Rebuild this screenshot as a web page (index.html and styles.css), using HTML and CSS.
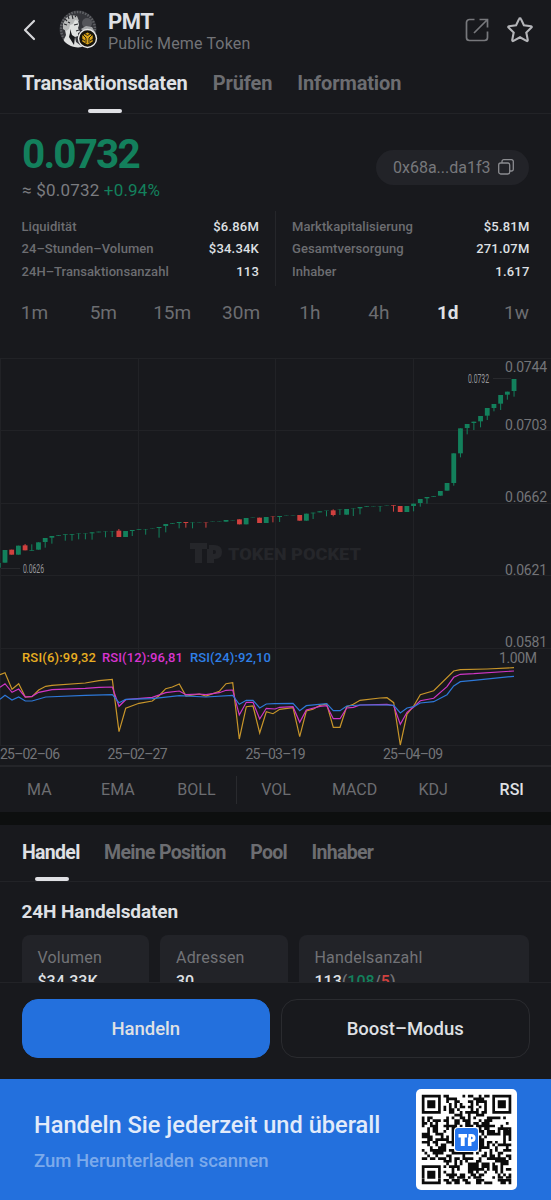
FILE: index.html
```html
<!DOCTYPE html>
<html lang="de">
<head>
    <meta charset="UTF-8">
    <meta name="viewport" content="width=device-width, initial-scale=1.0">
    <title>PMT - Public Meme Token</title>
    <link rel="stylesheet" href="styles.css">
</head>
<body>
    <div class="page">
        <header class="header">
            <svg class="back" width="14" height="22" viewBox="0 0 14 22"><path d="M12 2 3 11l9 9"/></svg>
            <svg class="avatar" width="39" height="39" viewBox="0 0 39 39">
                <defs><clipPath id="round"><circle cx="19" cy="19" r="18.5"/></clipPath></defs>
                <g clip-path="url(#round)">
                    <rect width="39" height="39" fill="#34353a"/>
                    <circle cx="19" cy="19" r="17" fill="none" stroke="#5f6165" stroke-width="2.5" stroke-dasharray="1.5 1.3"/>
                    <circle cx="28" cy="13" r="5" fill="#55565b"/>
                    <path d="M22 19l5-3 6 1 3 5-8 3z" fill="#a5a7a9"/>
                    <path d="M5 15l3-5 6-3 5 3 1 5-1 3 2 4-2 1v3l-3 1 1 5 8 6-13 3-9-7 4-9z" fill="#dfe1e0"/>
                    <path d="M4 14l3-6 5-3 6 1 2 5-4-1-2 4-3 1-1 4-3 2-3-2z" fill="#b7b9b9"/>
                    <path d="M6 9l2 2m1-5 1 3m3-4 1 4m2-3 1 1M5 14l3 1m1-3 2 1M15 15l4-1m-2 7 3-1" fill="none" stroke="#2a2b2f" stroke-width="1.1"/>
                    <path d="M11 19l2 6 3 2-1 8-5-8 1-4z" fill="#17181b"/>
                </g>
                <circle cx="28.5" cy="28.5" r="9" fill="#17140b" stroke="#e8e8e8" stroke-width="1.4"/>
                <path d="M28.5 22.500l5.200 3v6l-5.200 3-5.200-3v-6z" fill="#d9a31a"/>
                <path d="M24 25l3 3v5m6-8-3 3v5m-4-9 2.500 1.500L31 24m-8 5 3 2m8-2-3 2" fill="none" stroke="#17140b" stroke-width=".9"/>
            </svg>
            <div class="name">
                <h1>PMT</h1>
                <p>Public Meme Token</p>
            </div>
            <svg class="share" width="24" height="24" viewBox="0 0 24 24"><path d="M9.500 1.500h-5a3 3 0 0 0-3 3v15a3 3 0 0 0 3 3h15a3 3 0 0 0 3-3v-6M14.500 1.500h8v8M22 2 9 15"/></svg>
            <svg class="star" width="28" height="28" viewBox="0 0 28 28"><path d="M14 2.300q.7 0 1 .8l2.900 6.100 7.100 1q1.300.4.400 1.400l-5.100 4.900 1.500 7.500q0 1.500-1.300.9L14 21.300l-6.500 3.600q-1.300.6-1.300-.9l1.500-7.500-5.100-4.900q-.9-1 .4-1.400l7.100-1L13 3.100q.3-.8 1-.8z"/></svg>
        </header>

        <nav class="tabs">
            <a class="active">Transaktionsdaten</a>
            <a>Prüfen</a>
            <a>Information</a>
        </nav>

        <section class="price-row">
            <div>
                <div class="price">0.0732</div>
                <div class="price-sub">≈ $0.0732 <span class="up">+0.94%</span></div>
            </div>
            <div class="address">
                <span>0x68a...da1f3</span>
                <svg width="16" height="16" viewBox="0 0 16 16"><rect x=".7" y="4" width="11" height="11" rx="2"/><path d="M4 4V2.500A1.800 1.800 0 0 1 5.800.7h7.700a1.800 1.800 0 0 1 1.800 1.800v7.700a1.800 1.800 0 0 1-1.800 1.800H12"/></svg>
            </div>
        </section>

        <section class="stats">
            <dl>
                <div><dt>Liquidität</dt><dd>$6.86M</dd></div>
                <div><dt>24–Stunden–Volumen</dt><dd>$34.34K</dd></div>
                <div><dt>24H–Transaktionsanzahl</dt><dd>113</dd></div>
            </dl>
            <dl>
                <div><dt>Marktkapitalisierung</dt><dd>$5.81M</dd></div>
                <div><dt>Gesamtversorgung</dt><dd>271.07M</dd></div>
                <div><dt>Inhaber</dt><dd>1.617</dd></div>
            </dl>
        </section>

        <nav class="times">
            <a>1m</a><a>5m</a><a>15m</a><a>30m</a><a>1h</a><a>4h</a><a class="active">1d</a><a>1w</a>
        </nav>

        <svg class="chart" id="chart" width="551" height="415" viewBox="0 0 551 415">
            <g class="grid">
                <path d="M0 8.500H551M0 80.500H551M0 153.500H551M0 225.500H551M0 298.500H551M0 395.500H551M.5 8V395M138.500 8V395M275.500 8V395M413.500 8V395"/>
            </g>
            <g class="watermark">
                <path d="M190 193h17v6h-5v14h-7v-14h-5zM205 199h4v-4h5q8 0 8 7t-7 7h-1v4h-7v-14zM213 200v4h1q2 0 2-2t-2-2z"/>
                <text x="228" y="209.500" textLength="133" lengthAdjust="spacingAndGlyphs">TOKEN POCKET</text>
            </g>
            <g id="candles"></g>
            <path class="leader" d="M1 218.500H20M493 28.500H511"/>
            <text class="mark" x="23" y="223" textLength="21" lengthAdjust="spacingAndGlyphs">0.0626</text>
            <text class="mark" x="468" y="33" textLength="21" lengthAdjust="spacingAndGlyphs">0.0732</text>
            <g class="axis">
                <text x="505" y="21.500" textLength="42">0.0744</text>
                <text x="505" y="79.500" textLength="42">0.0703</text>
                <text x="505" y="152" textLength="42">0.0662</text>
                <text x="505" y="224.500" textLength="42">0.0621</text>
                <text x="505" y="296.500" textLength="42">0.0581</text>
                <text x="499" y="312.500" textLength="38">1.00M</text>
                <text x="0" y="408.500" textLength="60">25–02–06</text>
                <text x="107.500" y="408.500" textLength="60">25–02–27</text>
                <text x="245.500" y="408.500" textLength="60">25–03–19</text>
                <text x="383" y="408.500" textLength="60">25–04–09</text>
            </g>
            <g class="legend">
                <text class="rsi6" x="22" y="312" textLength="74">RSI(6):99,32</text>
                <text class="rsi12" x="102" y="312" textLength="81">RSI(12):96,81</text>
                <text class="rsi24" x="190" y="312" textLength="81">RSI(24):92,10</text>
            </g>
            <g id="rsi" class="rsi"></g>
        </svg>

        <nav class="indicators">
            <a>MA</a><a>EMA</a><a>BOLL</a><a class="split">VOL</a><a>MACD</a><a>KDJ</a><a class="active">RSI</a>
        </nav>

        <nav class="tabs trade-tabs">
            <a class="active">Handel</a>
            <a>Meine Position</a>
            <a>Pool</a>
            <a>Inhaber</a>
        </nav>

        <section class="trade">
            <h2>24H Handelsdaten</h2>
            <div class="cards">
                <div class="card"><p>Volumen</p><b>$34.33K</b></div>
                <div class="card"><p>Adressen</p><b>30</b></div>
                <div class="card wide"><p>Handelsanzahl</p><b>113</b><span>(<i class="up">108</i>/<i class="down">5</i>)</span></div>
            </div>
        </section>

        <div class="actions">
            <a class="btn primary">Handeln</a>
            <a class="btn">Boost–Modus</a>
        </div>

        <footer class="banner">
            <div>
                <h3>Handeln Sie jederzeit und überall</h3>
                <p>Zum Herunterladen scannen</p>
            </div>
            <svg class="qr" width="101" height="101" viewBox="0 0 101 101">
                <rect width="101" height="101" rx="5" fill="#fff"/>
                <g id="qr"></g>
                <rect x="38" y="38" width="25" height="25" rx="4" fill="#fff"/>
                <rect x="39" y="39" width="23" height="23" rx="3" fill="#2676ee"/>
                <path fill="#fff" fill-rule="evenodd" d="M42.500 45h8.500v3.500h-2.300v8.500h-3.900v-8.500h-2.300zM50.500 48.500h2v-3.500h3q4 0 4 4t-3.500 4h-.5v4h-3.600v-8.500zM55 47.700v2.600h.5q1.200 0 1.200-1.300t-1.200-1.300z"/>
            </svg>
        </footer>
    </div>
    <script src="chart.js"></script>
</body>
</html>
```

FILE: styles.css
```css
* {
    box-sizing: border-box;
}
body {
    margin: 0;
    background-color: #18191d;
    color: #dfe0e4;
    font-family: Roboto, "Liberation Sans", sans-serif;
    font-weight: 500;
}
h1, h2, h3, p, dl, dd {
    margin: 0;
}
svg {
    display: block;
    flex: none;
}
.page {
    display: flex;
    flex-direction: column;
    width: 551px;
    height: 1200px;
    overflow: hidden;
}
.up {
    color: #13805c;
}
.down {
    color: #d0413f;
}

/* header */
.header {
    display: flex;
    align-items: center;
    height: 60px;
    padding: 0 17px 0 22px;
}
.back {
    fill: none;
    stroke: #d5d6d9;
    stroke-width: 2.2;
    stroke-linecap: round;
    stroke-linejoin: round;
}
.avatar {
    margin-left: 23px;
}
.name {
    flex: 1;
    padding-left: 10px;
}
.name h1 {
    font-size: 22px;
    line-height: 24px;
    margin-top: 3px;
    letter-spacing: -0.5px;
}
.name p {
    font-size: 16px;
    line-height: 19px;
    font-weight: 400;
    color: #727377;
    letter-spacing: 0.15px;
}
.share, .star {
    fill: none;
    stroke: #77787c;
    stroke-width: 1.7;
}
.share {
    margin-right: 2px;
}
.star {
    margin-left: 15px;
    stroke: #b4b5b9;
    stroke-width: 2.1;
}

/* tabs */
.tabs {
    display: flex;
    gap: 25px;
    height: 54px;
    padding: 9px 22px 0;
    border-bottom: 1px solid #222327;
    font-size: 20px;
    line-height: 29px;
    font-weight: 700;
    letter-spacing: -0.13px;
    color: #6c6d71;
}
.tabs a {
    position: relative;
}
.tabs .active {
    color: #dfe0e4;
}
.tabs .active::after {
    content: "";
    position: absolute;
    left: 50%;
    bottom: 0;
    width: 34px;
    height: 4px;
    margin-left: -17px;
    border-radius: 2px;
    background-color: #dfe0e4;
}

/* price */
.price-row {
    display: flex;
    justify-content: space-between;
    height: 97px;
    padding: 15px 22px 0;
}
.price {
    font-size: 40.5px;
    line-height: 50px;
    font-weight: 700;
    letter-spacing: -1.85px;
    color: #13805c;
}
.price-sub {
    margin-top: -1px;
    font-size: 17px;
    line-height: 24px;
    font-weight: 400;
    letter-spacing: 0.2px;
    color: #7b7c80;
}
.address {
    display: flex;
    align-items: center;
    gap: 7px;
    width: 153px;
    height: 35px;
    margin-top: 21px;
    padding-left: 17px;
    border-radius: 18px;
    background-color: #222328;
    font-size: 16px;
    font-weight: 400;
    color: #77787c;
}
.address svg {
    fill: none;
    stroke: #8b8c90;
    stroke-width: 1.3;
}

/* stats */
.stats {
    display: flex;
    height: 75px;
    margin-top: 1px;
}
.stats dl {
    width: 275px;
    padding: 4.5px 16px 0 21.5px;
    font-size: 13px;
    line-height: 22.5px;
}
.stats dl + dl {
    width: 276px;
    padding: 4.5px 21.5px 0 16px;
    border-left: 1px solid #25262a;
}
.stats dl div {
    display: flex;
    justify-content: space-between;
}
.stats dt {
    color: #6c6d71;
    letter-spacing: 0.05px;
}
.stats dd {
    letter-spacing: 0.2px;
}

/* intervals */
.times {
    display: flex;
    height: 64px;
    padding-top: 14px;
    font-size: 19px;
    line-height: 26px;
    font-weight: 400;
    color: #6c6d71;
}
.times a {
    flex: 1;
    text-align: center;
}
.times .active {
    color: #dfe0e4;
    font-weight: 700;
}

/* chart */
.grid path {
    stroke: #212226;
}
.watermark {
    fill: #25262a;
    fill-rule: evenodd;
    font-size: 17px;
    font-weight: 900;
}
.leader {
    stroke: #28292d;
}
.mark {
    fill: #96979b;
    font-size: 13px;
    font-weight: 400;
}
.axis {
    fill: #737478;
    font-size: 14px;
    font-weight: 400;
}
.legend {
    font-size: 13px;
}
.rsi6 {
    fill: #e8ae22;
    stroke: #c7952a;
}
.rsi12 {
    fill: #d934cf;
    stroke: #cf36c5;
}
.rsi24 {
    fill: #2f80e8;
    stroke: #2d78d8;
}
.legend text {
    stroke: none;
}
.rsi polyline {
    fill: none;
    stroke-width: 1.2;
}

/* indicators */
.indicators {
    display: flex;
    align-items: center;
    height: 47px;
    border-top: 2px solid #242529;
    font-size: 16px;
    font-weight: 400;
    color: #6c6d71;
}
.indicators a {
    flex: 1;
    text-align: center;
    line-height: 28px;
}
.indicators .split {
    border-left: 1px solid #292a2e;
}
.indicators .active {
    color: #dfe0e4;
    font-weight: 500;
}
.trade-tabs {
    height: 70px;
    border-top: 13px solid #0d0f0f;
    padding-top: 14px;
    line-height: 28px;
    gap: 24.5px;
    font-size: 19.5px;
    letter-spacing: -0.7px;
}
.trade-tabs .active::after {
    margin-left: -16px;
}

/* trade data */
.trade {
    height: 100px;
    padding: 15px 22px 0 21.5px;
    overflow: hidden;
}
.trade h2 {
    font-size: 19px;
    line-height: 30px;
    letter-spacing: -0.1px;
}
.cards {
    display: flex;
    gap: 11px;
    margin-top: 8px;
}
.card {
    width: 127.5px;
    height: 80px;
    padding: 11px 16px;
    border-radius: 8px;
    background-color: #222328;
    font-size: 16px;
    line-height: 24px;
}
.card p {
    font-weight: 400;
    letter-spacing: 0.2px;
    color: #727377;
}
.card b {
    font-weight: 500;
}
.card span {
    color: #727377;
}
.card i {
    font-style: normal;
}
.card.wide {
    flex: 1;
}

/* bottom */
.actions {
    display: flex;
    gap: 11px;
    height: 98px;
    padding: 16px 21.5px 0;
    border-top: 1px solid #222327;
}
.btn {
    flex: 1;
    height: 59px;
    border: 1px solid #2a2b2f;
    border-radius: 16px;
    font-size: 18.5px;
    line-height: 58px;
    text-align: center;
}
.btn.primary {
    border-color: #2370dd;
    background-color: #2370dd;
}
.banner {
    display: flex;
    justify-content: space-between;
    height: 121px;
    padding: 10px 34px 0;
    background-color: #2370dd;
}
.banner h3 {
    margin-top: 20px;
    font-size: 23.6px;
    line-height: 32px;
    font-weight: 500;
    color: #e2ebfa;
}
.banner p {
    margin-top: 7px;
    font-size: 18.5px;
    line-height: 26px;
    color: #7caaeb;
}
```

FILE: chart.js
```js
const NS = "http://www.w3.org/2000/svg";
const add = (parent, tag, attrs) => {
    const el = document.createElementNS(NS, tag);
    for (const key in attrs) el.setAttribute(key, attrs[key]);
    parent.appendChild(el);
};

// body top, body bottom, high, low, 1 = falling (three units per pixel)
const candles = [
    [639, 653], [600, 638], [599, 614, 0, 0, 1], [587, 614], [586, 601, 582, 0, 1],
    [600, 602, 583], [577, 599], [564, 576, 0, 593], [558, 563, 0, 581], [556, 558],
    [553, 555, 0, 572], [552, 554, 0, 572], [550, 551, 0, 568], [550, 551, 0, 568], [547, 550, 0, 569],
    [545, 547], [544, 545, 0, 562], [543, 544, 0, 561], [542, 561, 537, 0, 1], [543, 561],
    [540, 543, 0, 558], [538, 540], [537, 538, 0, 554], [535, 536], [531, 534, 0, 563],
    [522, 528, 0, 547], [519, 521], [516, 519, 0, 535], [516, 519, 0, 533, 1], [517, 518, 0, 535],
    [518, 519], [517, 518, 0, 533, 1], [515, 516], [514, 515], [510, 515],
    [510, 511], [508, 523, 0, 0, 1], [504, 523], [502, 503], [503, 519, 0, 0, 1],
    [501, 519], [499, 500, 0, 517, 1], [498, 501, 0, 516], [496, 497], [495, 496],
    [495, 512, 0, 0, 1], [491, 512], [488, 490, 0, 507], [484, 487], [482, 483, 0, 499],
    [481, 495, 478, 499, 1], [478, 479, 0, 495], [477, 494], [475, 476, 0, 498], [471, 475, 0, 493],
    [469, 471], [468, 469], [468, 469, 0, 485], [465, 466], [466, 468, 0, 485, 1],
    [468, 486, 0, 0, 1], [468, 486], [461, 468, 0, 484], [447, 459, 0, 470], [441, 445, 0, 461],
    [438, 440], [423, 437], [399, 422], [310, 399, 0, 407], [235, 310, 0, 322],
    [222, 234, 0, 253], [215, 219, 0, 240], [198, 214, 0, 232], [174, 197, 0, 210], [162, 174, 0, 184],
    [135, 161, 0, 180], [125, 134, 0, 149], [87, 123, 0, 140]
];

const box = document.getElementById("candles");
candles.forEach(([top, bottom, high, low, down], i) => {
    const x = -1.7 + i * 6.698;
    const fill = down ? "#d0413f" : "#13805c";
    const y1 = (high || top) / 3;
    const y2 = (low || bottom) / 3;
    add(box, "rect", { x: x - 2.4, y: top / 3, width: 4.8, height: (bottom - top) / 3, fill });
    add(box, "rect", { x: x - 0.5, y: y1, width: 1, height: y2 - y1, fill });
});

const lines = {
    rsi6: "0,104 15,98 36,148 56,131 76,171 96,170 116,150 137,139 156,136 256,129 297,122 337,118 357,275 377,205 417,190 457,183 477,167 497,146 517,141 538,132 558,168 598,162 618,168 658,154 678,131 698,128 718,297 739,200 759,198 779,279 799,215 819,221 839,208 879,203 899,290 919,213 939,208 960,196 980,192 1000,262 1020,262 1040,200 1060,193 1080,181 1140,174 1161,173 1181,188 1201,315 1221,222 1241,198 1261,164 1301,152 1361,93 1381,89 1461,87 1542,83",
    rsi12: "0,142 15,131 36,157 56,147 76,171 96,169 116,157 156,149 256,145 297,142 337,141 357,199 377,179 457,172 497,158 538,153 558,164 598,162 618,164 658,158 678,151 698,150 718,225 739,187 759,187 779,237 799,205 825,207 839,202 879,200 899,247 919,210 960,199 980,197 1000,236 1020,236 1040,204 1060,202 1080,195 1161,193 1181,197 1201,253 1221,217 1241,201 1261,182 1301,175 1341,140 1361,112 1381,103 1421,101 1542,93",
    rsi24: "0,178 15,166 36,180 56,171 76,183 96,183 137,171 256,166 337,164 357,188 377,178 457,176 538,167 618,171 698,166 718,193 739,181 759,181 779,204 799,192 825,191 879,190 899,212 919,197 980,191 1000,212 1020,212 1040,198 1080,195 1161,195 1181,196 1201,219 1221,204 1241,200 1261,189 1301,185 1341,164 1361,138 1381,125 1421,121 1542,109"
};
for (const name in lines) {
    const points = lines[name].split(" ").map((p) => {
        const [x, y] = p.split(",");
        return `${(x / 3).toFixed(1)},${(290 + y / 3).toFixed(1)}`;
    }).join(" ");
    add(document.getElementById("rsi"), "polyline", { class: name, points });
}

// QR code, 33 x 33 modules
const qr = document.getElementById("qr");
const size = 33;
const unit = 89.5 / size;
let seed = 4711;
const random = () => (seed = (seed * 16807) % 2147483647) / 2147483647;
const finder = (r, c) => {
    const d = Math.max(Math.abs(r - 3), Math.abs(c - 3));
    return d === 3 || d < 2;
};
let d = "";
for (let r = 0; r < size; r++) {
    for (let c = 0; c < size; c++) {
        const fr = r > 24 ? size - 1 - r : r;
        const fc = c > 24 ? size - 1 - c : c;
        const corner = fr < 8 && fc < 8 && !(r > 24 && c > 24);
        let on = random() < 0.5;
        if (corner) on = fr < 7 && fc < 7 && finder(fr, fc);
        if (on) d += `M${(5.8 + c * unit).toFixed(2)} ${(5.8 + r * unit).toFixed(2)}h${unit.toFixed(2)}v${unit.toFixed(2)}h-${unit.toFixed(2)}z`;
    }
}
add(qr, "path", { d, fill: "#0b0b0b" });
```
